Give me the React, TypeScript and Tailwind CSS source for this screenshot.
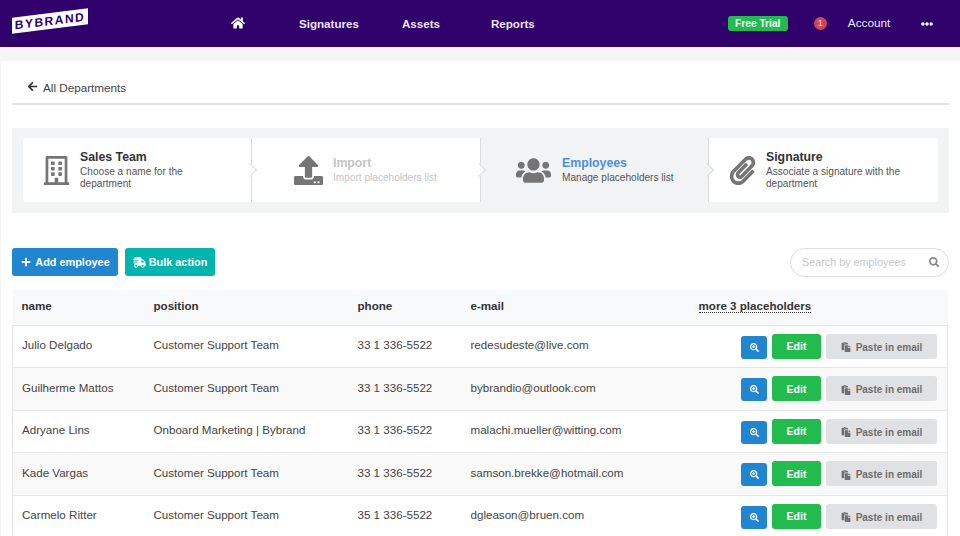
import { FaHome, FaEllipsisH, FaArrowLeft, FaRegBuilding, FaUpload, FaUsers, FaPaperclip, FaPlus, FaShippingFast, FaSearch, FaSearchPlus, FaPaste } from "react-icons/fa";
import type { ReactNode } from "react";

const employees = [
    { name: "Julio Delgado", position: "Customer Support Team", phone: "33 1 336-5522", email: "redesudeste@live.com" },
    { name: "Guilherme Mattos", position: "Customer Support Team", phone: "33 1 336-5522", email: "bybrandio@outlook.com" },
    { name: "Adryane Lins", position: "Onboard Marketing | Bybrand", phone: "33 1 336-5522", email: "malachi.mueller@witting.com" },
    { name: "Kade Vargas", position: "Customer Support Team", phone: "33 1 336-5522", email: "samson.brekke@hotmail.com" },
    { name: "Carmelo Ritter", position: "Customer Support Team", phone: "35 1 336-5522", email: "dgleason@bruen.com" },
];

function Step({ icon, title, text, titleClass, textClass, className, iconClass, chevron, chevronClass }: {
    icon: ReactNode; title: string; text: string; titleClass: string; textClass: string; className: string; iconClass: string; chevron?: boolean; chevronClass?: string;
}) {
    return (
        <div className={`relative flex items-center ${className}`}>
            <div className={`shrink-0 flex justify-center text-[#757575] ${iconClass}`}>{icon}</div>
            <div className="w-[145px] shrink-0">
                <div className={`text-[12.3px] leading-[15px] font-bold ${titleClass}`}>{title}</div>
                <div className={`text-[10.1px] leading-[12px] mt-[1px] ${textClass}`}>{text}</div>
            </div>
            {chevron && (
                <div className={`absolute right-[-4px] top-[27px] w-[10px] h-[10px] rotate-45 border-t border-r border-[#dcdcdc] z-10 ${chevronClass}`}></div>
            )}
        </div>
    );
}

export default function App() {
    return (
        <div className="w-[960px] h-[536px] overflow-hidden bg-[#f5f5f5] font-['Liberation_Sans',Arial,sans-serif] text-[#333]">
            {/* Top nav */}
            <nav className="h-[47px] bg-[#30006b] flex items-center text-[11.6px] text-[#ece6f6]">
                <div className="w-[238px] pl-[12px] flex items-center shrink-0">
                    <div className="w-[76px] h-[16px] -skew-y-[7deg] bg-white flex items-center justify-center mb-[6px]">
                        <span className="text-[12px] font-bold tracking-[1.5px] text-[#30006b]">BYBRAND</span>
                    </div>
                </div>
                <FaHome className="text-[14px] text-white -ml-[7px] mb-[1px]" />
                <span className="ml-[54px] font-bold">Signatures</span>
                <span className="ml-[43px] font-bold">Assets</span>
                <span className="ml-[51px] font-bold">Reports</span>
                <span className="ml-[193px] w-[60px] h-[15px] rounded-[3px] bg-[#22bb4e] text-white text-[10.2px] font-bold flex items-center justify-center">Free Trial</span>
                <span className="ml-[26px] w-[13px] h-[13px] rounded-full bg-[#d0455b] text-[9px] text-[#f5dfe2] flex items-center justify-center">1</span>
                <span className="ml-[21px] text-[11.8px]">Account</span>
                <FaEllipsisH className="ml-[31px] text-[12px] text-white" />
            </nav>

            {/* Card */}
            <main className="mt-[14px] ml-[1px] h-[475px] bg-white rounded-tl-[3px] px-[11px]">
                <div className="h-[44px] w-[937px] border-b-2 border-[#e3e3e3] flex items-center pt-[11px] pl-[15px] text-[11.7px] text-[#444]">
                    <FaArrowLeft className="text-[11px] mr-[5px] mb-[2px] text-[#333]" />
                    All Departments
                </div>

                {/* Steps */}
                <div className="mt-[23px] w-[937px] h-[85px] bg-[#f2f3f5] py-[10px] px-[11px]">
                    <div className="h-[64px] flex">
                        <Step icon={<FaRegBuilding className="text-[29px]" />} title="Sales Team" text="Choose a name for the department" iconClass="w-[57px] pl-[9px]"
                            titleClass="text-[#333]" textClass="text-[#555]" className="w-[229px] bg-white rounded-l-[3px] border-r border-[#dcdcdc]" chevron chevronClass="bg-white" />
                        <Step icon={<FaUpload className="text-[29px]" />} title="Import" text="Import placeholders list" iconClass="w-[81px] pl-[31px]"
                            titleClass="text-[#c4c4c4]" textClass="text-[#c4c4c4]" className="w-[229px] bg-white border-r border-[#dcdcdc]" chevron chevronClass="bg-white" />
                        <Step icon={<FaUsers className="text-[35px]" />} title="Employees" text="Manage placeholders list" iconClass="w-[81px] pl-[24px]"
                            titleClass="text-[#4a90d9]" textClass="text-[#555]" className="w-[228px] bg-[#f2f3f5] border-r border-[#dcdcdc]" chevron chevronClass="bg-[#f2f3f5]" />
                        <Step icon={<FaPaperclip className="text-[29px]" />} title="Signature" text="Associate a signature with the department" iconClass="w-[57px] pl-[9px]"
                            titleClass="text-[#333]" textClass="text-[#555]" className="w-[229px] bg-white rounded-r-[3px]" />
                    </div>
                </div>

                {/* Toolbar */}
                <div className="mt-[34px] w-[937px] h-[30px] flex items-center">
                    <button className="w-[106px] h-[28px] pl-[1px] rounded-[3px] bg-[#2285d0] text-white text-[10.9px] font-bold flex items-center justify-center gap-[4px]">
                        <FaPlus className="text-[10px]" /> Add employee
                    </button>
                    <button className="ml-[7px] w-[90px] h-[28px] rounded-[3px] bg-[#00b5ad] text-white text-[10.9px] font-bold flex items-center justify-center gap-[3px]">
                        <FaShippingFast className="text-[13px]" /> Bulk action
                    </button>
                    <div className="ml-auto w-[159px] h-[29px] rounded-full border border-[#dedede] flex items-center pl-[11px] pr-[9px] text-[10.8px] text-[#c8c8c8]">
                        Search by employees
                        <FaSearch className="ml-auto text-[10.5px] text-[#888]" />
                    </div>
                </div>

                {/* Employees */}
                <table className="mt-[13px] w-[936px] table-fixed border-collapse text-[11.6px]">
                    <thead>
                        <tr className="h-[35px] bg-[#f8f9fa] text-left text-[#333]">
                            <th className="w-[132px] pl-[9px] pb-[4px] font-bold">name</th>
                            <th className="w-[204px] pl-[9px] pb-[4px] font-bold">position</th>
                            <th className="w-[113px] pl-[9px] pb-[4px] font-bold">phone</th>
                            <th className="w-[228px] pl-[9px] pb-[4px] font-bold">e-mail</th>
                            <th className="pl-[9px] pb-[4px] font-bold">
                                <span className="border-b border-dotted border-[#333]">more 3 placeholders</span>
                            </th>
                        </tr>
                    </thead>
                    <tbody className="text-[#444]">
                        {employees.map((e, i) => (
                            <tr key={e.email} className={`h-[42.5px] border border-[#e6e6e6] ${i % 2 === 1 ? "bg-[#f9f9f9]" : "bg-white"}`}>
                                <td className="pl-[9px] pb-[3px]">{e.name}</td>
                                <td className="pl-[9px] pb-[3px]">{e.position}</td>
                                <td className="pl-[9px] pb-[3px]">{e.phone}</td>
                                <td className="pl-[9px] pb-[3px]">{e.email}</td>
                                <td>
                                    <div className="flex items-end justify-end pr-[10px]">
                                        <button className="w-[26px] h-[23px] rounded-[3px] bg-[#2285d0] text-white flex items-center justify-center">
                                            <FaSearchPlus className="text-[9px]" />
                                        </button>
                                        <button className="ml-[5px] w-[49px] h-[25px] pt-[2px] rounded-[3px] bg-[#22bb4e] text-white text-[10.5px] font-bold flex items-center justify-center">Edit</button>
                                        <button className="ml-[5px] w-[111px] h-[25px] pt-[2px] rounded-[3px] bg-[#e0e1e2] text-[#6e6e6e] text-[10px] font-bold flex items-center justify-center gap-[5px]">
                                            <FaPaste className="text-[10px]" /> Paste in email
                                        </button>
                                    </div>
                                </td>
                            </tr>
                        ))}
                    </tbody>
                </table>
            </main>
        </div>
    );
}
